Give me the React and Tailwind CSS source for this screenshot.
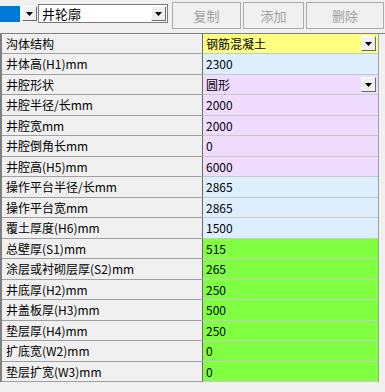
import React from "react";

const rows = [
    { label: "沟体结构", value: "钢筋混凝土", color: "bg-[#ffff80]", combo: true },
    { label: "井体高(H1)mm", value: "2300", color: "bg-[#ddeeff]" },
    { label: "井腔形状", value: "圆形", color: "bg-[#f0dcff]", combo: true },
    { label: "井腔半径/长mm", value: "2000", color: "bg-[#f0dcff]" },
    { label: "井腔宽mm", value: "2000", color: "bg-[#f0dcff]" },
    { label: "井腔倒角长mm", value: "0", color: "bg-[#f0dcff]" },
    { label: "井腔高(H5)mm", value: "6000", color: "bg-[#f0dcff]" },
    { label: "操作平台半径/长mm", value: "2865", color: "bg-[#ddeeff]" },
    { label: "操作平台宽mm", value: "2865", color: "bg-[#ddeeff]" },
    { label: "覆土厚度(H6)mm", value: "1500", color: "bg-[#ddeeff]" },
    { label: "总壁厚(S1)mm", value: "515", color: "bg-[#80ff40]" },
    { label: "涂层或衬砌层厚(S2)mm", value: "265", color: "bg-[#80ff40]" },
    { label: "井底厚(H2)mm", value: "250", color: "bg-[#80ff40]" },
    { label: "井盖板厚(H3)mm", value: "500", color: "bg-[#80ff40]" },
    { label: "垫层厚(H4)mm", value: "250", color: "bg-[#80ff40]" },
    { label: "扩底宽(W2)mm", value: "0", color: "bg-[#80ff40]" },
    { label: "垫层扩宽(W3)mm", value: "0", color: "bg-[#80ff40]" },
];

const font = { fontFamily: '"Noto Sans CJK SC", "Noto Sans", sans-serif' };

function Arrow() {
    return (
        <div className="w-[15px] h-[15px] shrink-0 bg-[#f0f0f0] border border-t-white border-l-white border-r-[#696969] border-b-[#696969] flex items-center justify-center">
            <svg width="7" height="4" viewBox="0 0 7 4">
                <path d="M0 0h7L3.5 4z" fill="#000" />
            </svg>
        </div>
    );
}

function Button({ children, className }) {
    return (
        <div className={`h-[27px] bg-[#f0f0f0] border border-[#adadad] flex items-center justify-center text-[13px] text-[#a0a0a0] ${className}`}>
            {children}
        </div>
    );
}

export default function App() {
    return (
        <div className="w-[385px] h-[392px] overflow-hidden bg-[#f0f0f0] text-black" style={font}>
            {/* toolbar */}
            <div className="h-[33px] flex items-start">
                <div className="mt-[5px] flex items-center h-[17px]">
                    <div className="w-[20px] h-[16px] bg-[#0078d7]" />
                    <div className="ml-[2px]">
                        <Arrow />
                    </div>
                </div>
                <div className="mt-[4px] ml-[1px] w-[130px] h-[19px] bg-white border border-[#7a7a7a] flex items-center pl-[3px] pr-[1px]">
                    <span className="flex-1 text-[13px] leading-none">井轮廓</span>
                    <Arrow />
                </div>
                <Button className="mt-[2px] ml-[4px] w-[69px]">复制</Button>
                <Button className="mt-[2px] ml-[2px] w-[61px]">添加</Button>
                <Button className="mt-[2px] ml-[2px] w-[78px]">删除</Button>
            </div>

            {/* grid */}
            <div className="border-t border-l-2 border-[#808080] w-[385px] flex">
                <div className="w-[376px]">
                    {rows.map((r, i) => (
                        <div
                            key={i}
                            className={`flex ${i % 2 ? "h-[21px]" : "h-[20px]"}`}
                        >
                            <div className="w-[200px] border-b border-[#a0a0a0] flex items-center pl-[4px] text-[12px] leading-none">
                                {r.label}
                            </div>
                            <div className={`flex-1 border-l border-[#696969] border-b border-b-[#c8c8c8] ${r.color} flex items-center pl-[3px] pr-[2px] text-[12px] leading-none`}>
                                <span className="flex-1">{r.value}</span>
                                {r.combo && <Arrow />}
                            </div>
                        </div>
                    ))}
                </div>
                <div className="flex-1 border-l border-[#a0a0a0]" />
            </div>
        </div>
    );
}
